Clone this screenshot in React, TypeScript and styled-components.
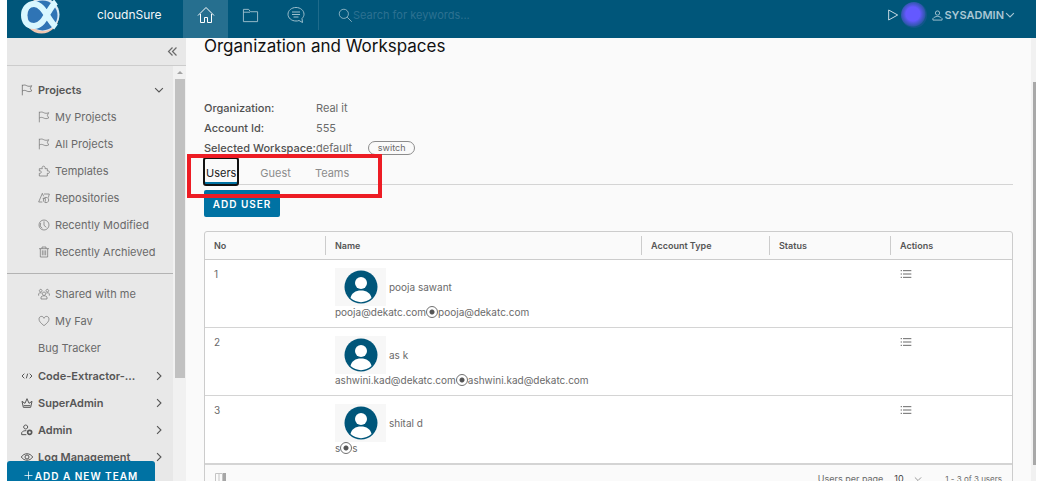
import React from "react";
import styled, { createGlobalStyle, css } from "styled-components";

const GlobalStyle = createGlobalStyle`
  * { box-sizing: border-box; }
  html, body { margin: 0; background: #fff; overflow: hidden; }
  body { font-family: Inter, "Liberation Sans", sans-serif; font-size: 11px; color: #6a6a6a; }
  button, input, select { font: inherit; color: inherit; }
  a { color: inherit; text-decoration: none; }
`;

const Shell = styled.div`
  position: relative;
  display: flex;
  flex-direction: column;
  height: 100vh;
  padding: 0 13px 0 7px;
  overflow: hidden;
`;

/* ---------- header ---------- */

const Header = styled.header`
  display: flex;
  flex: none;
  height: 38px;
  background: #00567a;
  color: #c5d9e2;
`;

const Brand = styled.a`
  display: flex;
  align-items: center;
  gap: 36px;
  width: 176px;
  padding: 0 0 8px 13px;
  color: #f2f7f9;
  font-size: 12px;
  line-height: 16px;
`;

const HeaderNav = styled.nav`
  display: flex;
  height: 30px;
  border-right: 1px solid #1f6b8b;
`;

const HeaderLink = styled.a<{ $active?: boolean }>`
  display: flex;
  align-items: center;
  justify-content: center;
  width: 45px;
  height: ${(p) => (p.$active ? "38px" : "30px")};
  padding-bottom: ${(p) => (p.$active ? "8px" : "0")};
  background: ${(p) => (p.$active ? "#266f8f" : "transparent")};
  color: ${(p) => (p.$active ? "#fff" : "#9dbfcd")};
`;

const SearchBox = styled.label`
  display: flex;
  flex: 1;
  align-items: center;
  height: 30px;
  padding-left: 19px;
  color: #9dbfcd;
`;

const SearchInput = styled.input`
  flex: 1;
  min-width: 0;
  padding: 0;
  border: 0;
  outline: 0;
  background: transparent;
  font-size: 11px;
  &::placeholder { color: #2c7191; opacity: 1; }
`;

const HeaderTools = styled.div`
  display: flex;
  align-items: center;
  height: 30px;
  padding-right: 21px;
`;

const IconButton = styled.button`
  display: flex;
  padding: 0;
  border: 0;
  background: none;
`;

const StatusOrb = styled.span`
  width: 26px;
  height: 26px;
  margin: 0 5px 0 2px;
  border-radius: 50%;
  background: radial-gradient(circle at 46% 46%, #6459ff 0 7px, #4f57dc 9px, #2f57ad 12px, #12568a 13px);
`;

const UserButton = styled(IconButton)`
  align-items: center;
  gap: 1px;
  color: #a9c7d4;
  font-size: 11px;
  font-weight: 600;
`;

/* ---------- sidebar ---------- */

const Body = styled.div`
  display: flex;
  flex: 1;
  min-height: 0;
`;

const Sidebar = styled.aside`
  display: flex;
  flex-direction: column;
  flex: none;
  width: 179px;
  background: #e8e8e8;
`;

const CollapseBar = styled.div`
  display: flex;
  flex: none;
  align-items: center;
  justify-content: flex-end;
  height: 28px;
  padding-right: 8px;
  border-bottom: 1px solid #ccc;
`;

const SidebarBody = styled.div`
  display: flex;
  flex: 1;
  min-height: 0;
`;

const SideNav = styled.nav`
  flex: 1;
  padding-top: 10px;
  overflow: hidden;
`;

const NavList = styled.ul<{ $divided?: boolean }>`
  margin: 0;
  padding: 0;
  list-style: none;
  ${(p) =>
    p.$divided &&
    css`
      margin: 8px 0 1px;
      padding-top: 6px;
      border-top: 1px solid #b3b3b3;
    `}
`;

const rowLayout = css`
  display: flex;
  align-items: center;
  width: 100%;
  height: 27px;
  line-height: 16px;
`;

const NavGroup = styled.button`
  ${rowLayout}
  gap: 5px;
  padding: 0 9px 0 14px;
  border: 0;
  background: none;
  color: #565656;
  font-weight: 600;
  text-align: left;
`;

const GroupLabel = styled.span`
  flex: 1;
`;

const NavItem = styled.a`
  ${rowLayout}
  gap: 5px;
  padding-left: 31px;
`;

const ScrollTrack = styled.div`
  display: flex;
  flex-direction: column;
  align-items: center;
  flex: none;
  width: 13px;
  background: #f1f1f1;
`;

const ScrollArrow = styled.span`
  width: 0;
  margin: 5px 0;
  border: 3px solid transparent;
  border-top: 0;
  border-bottom-color: #a3a3a3;
`;

const ScrollThumb = styled.span`
  width: 10px;
  height: 72%;
  background: #c1c1c1;
`;

const AddTeamButton = styled.button`
  position: absolute;
  left: 7px;
  bottom: -9px;
  display: flex;
  align-items: center;
  justify-content: center;
  gap: 2px;
  width: 148px;
  height: 29px;
  padding: 0;
  border: 0;
  border-radius: 3px;
  background: #0072a3;
  color: #fff;
  font-size: 10px;
  font-weight: 600;
  letter-spacing: 1px;
`;

/* ---------- main ---------- */

const Main = styled.main`
  flex: 1;
  min-width: 0;
  padding: 0 18px;
  background: #fafafa;
  overflow: hidden;
`;

const Title = styled.h1`
  margin: 0 0 44px;
  color: #111;
  font-size: 17px;
  font-weight: 400;
  line-height: 16px;
`;

const Details = styled.dl`
  display: grid;
  grid-template-columns: 112px 1fr;
  margin: 0;
  line-height: 20px;
  dt { color: #505050; font-weight: 500; white-space: nowrap; }
  dd { display: flex; align-items: center; gap: 16px; margin: 0; }
`;

const SwitchButton = styled.button`
  width: 47px;
  height: 14px;
  padding: 0;
  border: 1px solid #8c8c8c;
  border-radius: 7px;
  background: none;
  font-size: 9px;
  line-height: 12px;
`;

const TabBar = styled.div`
  position: relative;
  display: flex;
  gap: 20px;
  height: 27px;
  border-bottom: 1px solid #d4d4d4;
`;

const Tab = styled.button<{ $active?: boolean }>`
  height: 27px;
  padding: 3px 2px 0;
  border: 0;
  background: none;
  color: #8c8c8c;
  line-height: 24px;
  ${(p) =>
    p.$active &&
    css`
      border-radius: 2px;
      color: #222;
      outline: 2px solid #111;
      outline-offset: -1px;
      box-shadow: inset 0 -3px 0 #0072a3;
    `}
`;

const Highlight = styled.span`
  position: absolute;
  top: -4px;
  left: -17px;
  width: 195px;
  height: 44px;
  border: 4px solid #ed1c24;
  pointer-events: none;
`;

const AddUserButton = styled.button`
  display: block;
  width: 76px;
  height: 27px;
  margin: 5px 0 14px;
  padding: 0;
  border: 0;
  border-radius: 2px;
  background: #0072a3;
  color: #fff;
  font-size: 10px;
  font-weight: 600;
  letter-spacing: 1px;
`;

const GridCard = styled.section`
  border: 1px solid #ccc;
  border-radius: 3px;
`;

const Table = styled.table`
  width: 100%;
  border-collapse: separate;
  border-spacing: 0;
  table-layout: fixed;
  font-size: 10px;
`;

const HeadCell = styled.th`
  position: relative;
  height: 28px;
  padding: 0 10px;
  border-bottom: 1px solid #ccc;
  color: #565656;
  font-size: 9px;
  font-weight: 600;
  text-align: left;
  &:first-child { padding-left: 9px; }
  & + &::before {
    content: "";
    position: absolute;
    top: 4px;
    bottom: 4px;
    left: 0;
    border-left: 1px solid #ccc;
  }
`;

const Cell = styled.td`
  height: 68px;
  padding: 8px 10px 0;
  border-bottom: 1px solid #d4d4d4;
  background: #fff;
  line-height: 12px;
  vertical-align: top;
  &:first-child { padding-left: 9px; }
`;

const Person = styled.div`
  display: flex;
  align-items: center;
  gap: 3px;
`;

const AvatarBox = styled.span`
  display: flex;
  align-items: center;
  justify-content: center;
  width: 51px;
  height: 38px;
  background: #f7f7f7;
`;

const EmailLine = styled.div`
  display: flex;
  align-items: center;
`;

const Radio = styled.input`
  appearance: none;
  width: 12px;
  height: 12px;
  margin: 0;
  border: 1px solid #707070;
  border-radius: 50%;
  background: radial-gradient(circle, #555 0 2px, #fff 3px);
`;

const Footer = styled.footer`
  display: flex;
  align-items: center;
  height: 28px;
  padding: 0 10px;
  border-top: 1px solid #d4d4d4;
  font-size: 9px;
`;

const PageSize = styled.label`
  display: flex;
  align-items: center;
  gap: 11px;
  margin-left: auto;
`;

const SelectWrap = styled.span`
  display: flex;
  align-items: center;
  margin-right: 23px;
`;

const Select = styled.select`
  appearance: none;
  width: 20px;
  padding: 0;
  border: 0;
  background: none;
  color: #444;
`;

const PageRange = styled.span`
  font-size: 8px;
`;

const MainScroll = styled.div`
  flex: none;
  width: 5px;
  padding: 44px 0 0 2px;
  background: #f1f1f1;
`;

const MainThumb = styled.div`
  height: 96%;
  background: #a8a8a8;
`;

/* ---------- icons ---------- */

const glyphs = {
  home: <path d="M2 19 18 3l16 16M7 16v17h8V23h6v10h8V16" />,
  folder: <path d="M3 31V5h11l4 5h15v21zM3 11h14" />,
  chat: (
    <>
      <path d="M18 3C9 3 2 9 2 16.500S9 30 18 30c2 0 4 0 6-1l7 4-1-8c2-2 4-5 4-8.500C34 9 27 3 18 3z" />
      <path d="M10 12h16M10 17h16M13 22h10" />
    </>
  ),
  search: <path d="M14 3a11 11 0 1 0 0 22 11 11 0 0 0 0-22M22 22l11 11" />,
  play: <path d="M5 3v30l27-15z" />,
  user: <path d="M18 3a7 7 0 1 0 0 14 7 7 0 0 0 0-14M3 33v-5c3-4 9-7 15-7s12 3 15 7v5z" />,
  down: <path d="m4 11 14 14 14-14" />,
  right: <path d="m11 4 14 14-14 14" />,
  collapse: <path d="M18 5 5 18l13 13M31 5 18 18l13 13" />,
  flag: <path d="M4 2v32M4 5c5-3 9-2 13 0s9 3 15 0l-4 8 4 8c-6 3-11 2-15 0s-8-3-13 0" />,
  puzzle: (
    <path d="M4 11h9C9 1 24 1 21 11h7v7c9-2 9 9 0 7v8H4v-8c8 1 8-9 0-7z" />
  ),
  shapes: <path d="M2 30 13 4l4 9M2 30h11M18 6h16l-3 11M24 16a8 8 0 1 0 .1 0M14 19h8v10" />,
  clock: (
    <>
      <circle cx="18" cy="18" r="15" />
      <path d="M18 7v12l7 6M8 12a12 12 0 0 0 5 16" />
    </>
  ),
  trash: <path d="M3 8h30M12 8V3h12v5M7 8v25h22V8M13 13v15M18 13v15M23 13v15" />,
  group: (
    <path d="M18 12a5 5 0 1 0 .1 0M9 33v-6c3-5 15-5 18 0v6zM8 4a4 4 0 1 0 .1 0M28 4a4 4 0 1 0 .1 0M2 23v-6c2-3 6-3 9-2M34 23v-6c-2-3-6-3-9-2" />
  ),
  heart: <path d="M18 32C8 24 3 19 3 12c0-9 12-11 15-2 3-9 15-7 15 2 0 7-5 12-15 20z" />,
  code: <path d="m10 11-7 7 7 7M26 11l7 7-7 7M20 11l-4 14" />,
  crown: <path d="M7 31h22l4-18-9 6-6-14-6 14-9-6zM8 26h20" />,
  admin: (
    <>
      <path d="M14 3a6 6 0 1 0 .1 0M16 32H2v-6c3-5 8-6 14-6" />
      <circle cx="26" cy="25" r="6" strokeWidth="5" />
    </>
  ),
  eye: (
    <>
      <path d="M1 18C9 5 27 5 35 18 27 31 9 31 1 18z" />
      <circle cx="18" cy="18" r="6" />
    </>
  ),
  list: <path d="M2 8h4M2 18h4M2 28h4M9 8h25M9 18h25M9 28h25" />,
  plus: <path d="M18 2v32M2 18h32" />,
};

type GlyphName = keyof typeof glyphs;

const Glyph = styled.svg`
  flex: none;
  fill: none;
  stroke: currentColor;
`;

function Icon({ name, size = 11, weight = 3 }: { name: GlyphName; size?: number; weight?: number }) {
  return (
    <Glyph width={size} height={size} viewBox="0 0 36 36" strokeWidth={weight} aria-hidden="true">
      {glyphs[name]}
    </Glyph>
  );
}

const LogoMark = styled.svg`
  flex: none;
  align-self: flex-start;
`;

function Logo() {
  return (
    <LogoMark width="41" height="38" viewBox="0 0 41 38" aria-hidden="true">
      <circle cx="21.500" cy="16" r="17.500" fill="#f1c6b0" />
      <circle cx="23" cy="14.500" r="16.500" fill="#d8e9f4" />
      <circle cx="22.500" cy="15.500" r="15" fill="#2f74b5" />
      <path
        d="M36 2C28 8 25 26 14 26 7 26 4 21 4 15S8 4 14 4c10 0 14 17 22 23"
        fill="none"
        stroke="#d8f7ff"
        strokeWidth="6"
      />
    </LogoMark>
  );
}

function Avatar() {
  return (
    <svg width="34" height="34" viewBox="0 0 34 34" aria-hidden="true">
      <circle cx="17" cy="17" r="16.500" fill="#00567a" />
      <circle cx="17" cy="13" r="6" fill="#fff" />
      <path d="M6.500 28c1-5 5-7.500 10.500-7.500S26.500 23 27.500 28c-6 5.500-15 5.500-21 0z" fill="#fff" />
    </svg>
  );
}

function ColumnsIcon() {
  return (
    <svg width="11" height="12" viewBox="0 0 11 12" aria-hidden="true">
      <path d="M.5.5h7v11h-7zM4 .5v11" fill="none" stroke="#c4c4c4" />
      <path d="M8 0h3v12H8z" fill="#a6a6a6" />
    </svg>
  );
}

/* ---------- data ---------- */

const projectLinks: { label: string; icon: GlyphName }[] = [
  { label: "My Projects", icon: "flag" },
  { label: "All Projects", icon: "flag" },
  { label: "Templates", icon: "puzzle" },
  { label: "Repositories", icon: "shapes" },
  { label: "Recently Modified", icon: "clock" },
  { label: "Recently Archieved", icon: "trash" },
];

const sharedLinks: { label: string; icon?: GlyphName }[] = [
  { label: "Shared with me", icon: "group" },
  { label: "My Fav", icon: "heart" },
  { label: "Bug Tracker" },
];

const groups: { label: string; icon: GlyphName }[] = [
  { label: "Code-Extractor-...", icon: "code" },
  { label: "SuperAdmin", icon: "crown" },
  { label: "Admin", icon: "admin" },
  { label: "Log Management", icon: "eye" },
];

const users = [
  { name: "pooja sawant", email: "pooja@dekatc.com" },
  { name: "as k", email: "ashwini.kad@dekatc.com" },
  { name: "shital d", email: "s" },
];

export default function App() {
  return (
    <Shell>
      <GlobalStyle />
      <Header>
        <Brand href="#">
          <Logo />
          cloudnSure
        </Brand>
        <HeaderNav>
          <HeaderLink href="#" aria-label="Home" $active>
            <Icon name="home" size={18} weight={2} />
          </HeaderLink>
          <HeaderLink href="#" aria-label="Folders">
            <Icon name="folder" size={17} weight={2} />
          </HeaderLink>
          <HeaderLink href="#" aria-label="Messages">
            <Icon name="chat" size={18} weight={2} />
          </HeaderLink>
        </HeaderNav>
        <SearchBox>
          <Icon name="search" size={15} weight={2} />
          <SearchInput type="search" placeholder="Search for keywords..." aria-label="Search" />
        </SearchBox>
        <HeaderTools>
          <IconButton aria-label="Run">
            <Icon name="play" size={12} />
          </IconButton>
          <StatusOrb />
          <UserButton>
            <Icon name="user" size={11} />
            <span>SYSADMIN</span>
            <Icon name="down" size={10} weight={4} />
          </UserButton>
        </HeaderTools>
      </Header>

      <Body>
        <Sidebar>
          <CollapseBar>
            <IconButton aria-label="Collapse menu">
              <Icon name="collapse" size={11} weight={4} />
            </IconButton>
          </CollapseBar>
          <SidebarBody>
            <SideNav>
              <NavGroup>
                <Icon name="flag" size={12} weight={2} />
                <GroupLabel>Projects</GroupLabel>
                <Icon name="down" size={10} weight={4} />
              </NavGroup>
              <NavList>
                {projectLinks.map((l) => (
                  <li key={l.label}>
                    <NavItem href="#">
                      <Icon name={l.icon} size={12} weight={2} />
                      {l.label}
                    </NavItem>
                  </li>
                ))}
              </NavList>
              <NavList $divided>
                {sharedLinks.map((l) => (
                  <li key={l.label}>
                    <NavItem href="#">
                      {l.icon && <Icon name={l.icon} size={12} weight={2} />}
                      {l.label}
                    </NavItem>
                  </li>
                ))}
              </NavList>
              {groups.map((g) => (
                <NavGroup key={g.label}>
                  <Icon name={g.icon} size={12} />
                  <GroupLabel>{g.label}</GroupLabel>
                  <Icon name="right" size={10} weight={4} />
                </NavGroup>
              ))}
            </SideNav>
            <ScrollTrack>
              <ScrollArrow />
              <ScrollThumb />
            </ScrollTrack>
          </SidebarBody>
        </Sidebar>

        <Main>
          <Title>Organization and Workspaces</Title>
          <Details>
            <dt>Organization:</dt>
            <dd>Real it</dd>
            <dt>Account Id:</dt>
            <dd>555</dd>
            <dt>Selected Workspace:</dt>
            <dd>
              default
              <SwitchButton>switch</SwitchButton>
            </dd>
          </Details>
          <TabBar role="tablist">
            <Tab role="tab" aria-selected="true" $active>
              Users
            </Tab>
            <Tab role="tab">Guest</Tab>
            <Tab role="tab">Teams</Tab>
            <Highlight />
          </TabBar>
          <AddUserButton>ADD USER</AddUserButton>
          <GridCard>
            <Table>
              <colgroup>
                <col style={{ width: 120 }} />
                <col />
                <col style={{ width: 128 }} />
                <col style={{ width: 121 }} />
                <col style={{ width: 122 }} />
              </colgroup>
              <thead>
                <tr>
                  <HeadCell>No</HeadCell>
                  <HeadCell>Name</HeadCell>
                  <HeadCell>Account Type</HeadCell>
                  <HeadCell>Status</HeadCell>
                  <HeadCell>Actions</HeadCell>
                </tr>
              </thead>
              <tbody>
                {users.map((u, i) => (
                  <tr key={u.name}>
                    <Cell>{i + 1}</Cell>
                    <Cell>
                      <Person>
                        <AvatarBox>
                          <Avatar />
                        </AvatarBox>
                        {u.name}
                      </Person>
                      <EmailLine>
                        {u.email}
                        <Radio type="radio" name={`user-${i}`} defaultChecked aria-label={u.email} />
                        {u.email}
                      </EmailLine>
                    </Cell>
                    <Cell />
                    <Cell />
                    <Cell>
                      <IconButton aria-label="Actions">
                        <Icon name="list" size={12} />
                      </IconButton>
                    </Cell>
                  </tr>
                ))}
              </tbody>
            </Table>
            <Footer>
              <ColumnsIcon />
              <PageSize>
                Users per page
                <SelectWrap>
                  <Select defaultValue="10">
                    <option>10</option>
                  </Select>
                  <Icon name="down" size={8} />
                </SelectWrap>
              </PageSize>
              <PageRange>1 - 3 of 3 users</PageRange>
            </Footer>
          </GridCard>
        </Main>
        <MainScroll>
          <MainThumb />
        </MainScroll>
      </Body>
      <AddTeamButton>
        <Icon name="plus" size={9} />
        ADD A NEW TEAM
      </AddTeamButton>
    </Shell>
  );
}
